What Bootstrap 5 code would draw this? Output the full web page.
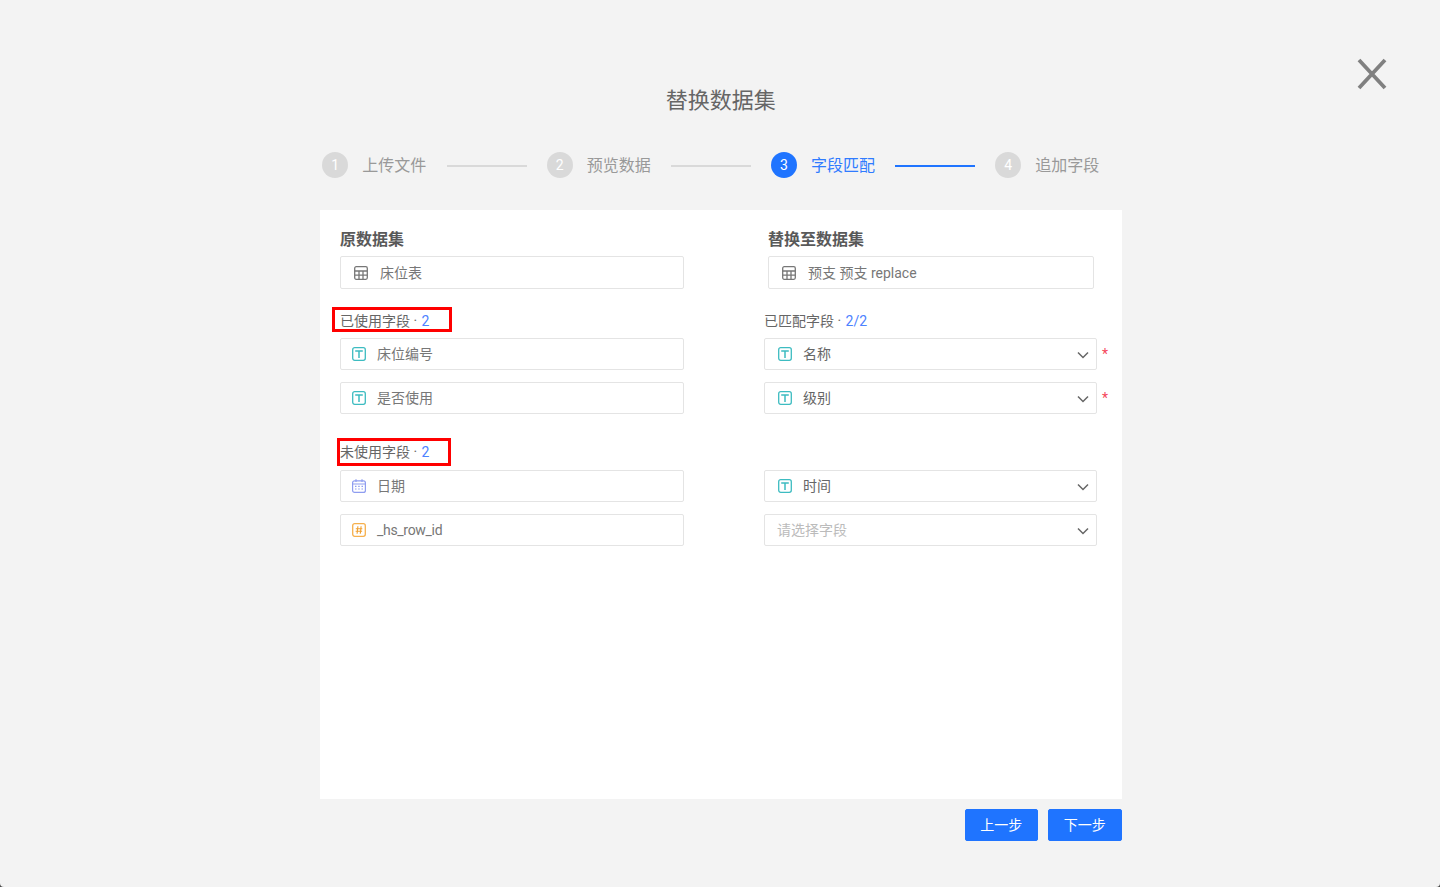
<!doctype html>
<html lang="zh">
<head>
<meta charset="utf-8">
<title>替换数据集</title>
<link href="https://cdn.jsdelivr.net/npm/bootstrap@5.3.0/dist/css/bootstrap.min.css" rel="stylesheet">
<style>
html,body{height:100%;}
body{background:#4a4a4a;font-family:Roboto,"Noto Sans CJK SC",sans-serif;font-size:14px;color:#666;overflow:hidden;}
.shell{position:relative;height:887px;background:#f3f3f3;border-radius:0 0 4px 4px;}
.close-x{position:absolute;left:1356px;top:58px;width:32px;height:32px;}
.wrap{width:801.6px;margin-left:320px;}
.ttl{margin:0;padding-top:86px;height:152px;font-size:22px;line-height:30px;font-weight:400;color:#666;text-align:center;}
.steps{height:58px;align-items:flex-start;padding-left:2.300px;}
.step-dot{width:26px;height:26px;border-radius:50%;background:#d9d9d9;color:#fff;font-size:14px;line-height:26px;text-align:center;flex:none;}
.step-lbl{margin-left:14px;padding-top:1px;font-size:16px;line-height:26px;color:#999;width:64.33px;white-space:nowrap;}
.step-bar{width:80px;height:2px;background:#d9d9d9;margin:13px 20px 0;flex:none;}
.step-on .step-dot{background:#1f74ff;}
.step-on .step-lbl{color:#2f7bff;}
.step-bar.on{background:#1f74ff;}
.sheet{background:#fff;height:589px;padding:20px 0 0 20px;position:relative;}
.col-a{width:344px;flex:none;}
.col-b{width:333px;flex:none;margin-left:80px;}
.head{font-size:16px;font-weight:700;line-height:20px;color:#595959;margin-bottom:6px;}
.box{height:32px;border:1px solid #e4e4e4;border-radius:2px;background:#fff;color:#777;display:flex;align-items:center;padding-left:11px;line-height:20px;}
.box.top{height:33px;padding-left:13px;}
.box.top svg.ico{flex:none;width:14px;height:14px;margin-right:12px;}
.box .sq{flex:none;width:14px;height:14px;margin-right:11px;}
.tight{letter-spacing:-.3px;}
.sub{font-size:14px;line-height:20px;color:#666;height:20px;white-space:nowrap;margin-top:22px;margin-bottom:7px;}
.sub.low{margin-top:28px;margin-bottom:8px;}
.sub b{font-weight:400;color:#4d82ff;margin-left:1px;}
.mark-red{position:absolute;border:3px solid #f00;pointer-events:none;}
.gap12{margin-bottom:12px;}
.sel{position:relative;color:#666;padding-left:13px;}
.sel .arrow{position:absolute;right:7px;top:12px;width:12px;height:8px;}
.sel.ph{color:#bbb;padding-left:12px;}
.req{position:absolute;left:337px;top:7px;color:#f5475b;font-size:14px;line-height:16px;}
.foot{justify-content:flex-end;gap:10px;padding-top:10px;}
.foot .btn{width:73.500px;height:32px;padding:0;background:#1f74ff;border:1px solid #1f74ff;border-radius:2px;font-size:14px;line-height:30px;color:#fff;}
</style>
</head>
<body>
<div class="shell">
  <svg class="close-x" viewBox="0 0 32 32"><path d="M3 2 29 30M29 2 3 30" stroke="#808080" stroke-width="3.800" fill="none"/></svg>
  <div class="wrap">
    <h1 class="ttl">替换数据集</h1>
    <div class="d-flex steps">
      <div class="step-dot">1</div><div class="step-lbl">上传文件</div><div class="step-bar"></div>
      <div class="step-dot">2</div><div class="step-lbl">预览数据</div><div class="step-bar"></div>
      <div class="d-flex step-on"><div class="step-dot">3</div><div class="step-lbl">字段匹配</div></div><div class="step-bar on"></div>
      <div class="step-dot">4</div><div class="step-lbl">追加字段</div>
    </div>
    <div class="sheet d-flex">
      <div class="col-a">
        <div class="head">原数据集</div>
        <div class="box top"><svg class="ico" viewBox="0 0 14 14" fill="none" stroke="#777" stroke-width="1.300"><rect x=".7" y=".7" width="12.600" height="12.600" rx="1.500"/><path d="M.7 5h12.600M.7 9.200h12.600M5 5v8.300M9 5v8.300"/></svg>床位表</div>
        <div class="sub">已使用字段 · <b>2</b></div>
        <div class="box gap12"><svg class="sq" viewBox="0 0 14 14" fill="none"><rect x=".7" y=".7" width="12.600" height="12.600" rx="2" stroke="#3dbcc1" stroke-width="1.300"/><path d="M3.200 3.900h7.600M7 3.900v7" stroke="#3dbcc1" stroke-width="1.500"/></svg>床位编号</div>
        <div class="box"><svg class="sq" viewBox="0 0 14 14" fill="none"><rect x=".7" y=".7" width="12.600" height="12.600" rx="2" stroke="#3dbcc1" stroke-width="1.300"/><path d="M3.200 3.900h7.600M7 3.900v7" stroke="#3dbcc1" stroke-width="1.500"/></svg>是否使用</div>
        <div class="sub low">未使用字段 · <b>2</b></div>
        <div class="box gap12"><svg class="sq" viewBox="0 0 14 14" fill="none" stroke="#8f9df0" stroke-width="1.200"><rect x=".6" y="1.800" width="12.800" height="11.600" rx="2"/><path d="M.6 5h12.800M4 .3v2.800M10 .3v2.800"/><path d="M3 7.300h1.500M6.200 7.300h1.500M9.500 7.300h1.500M3 10h1.500M6.200 10h1.500M9.500 10h1.500"/></svg>日期</div>
        <div class="box"><svg class="sq" viewBox="0 0 14 14" fill="none"><rect x=".7" y=".7" width="12.600" height="12.600" rx="2" stroke="#f6b04d" stroke-width="1.300"/><path d="M5.900 3.300 5.100 10.700M9.100 3.300 8.300 10.700M3.800 5.700h6.500M3.600 8.300h6.500" stroke="#f0a030" stroke-width="1.100"/></svg><span class="tight">_hs_row_id</span></div>
      </div>
      <div class="col-b">
        <div class="head" style="margin-left:4px">替换至数据集</div>
        <div class="box top" style="margin-left:4px;width:325.500px"><svg class="ico" viewBox="0 0 14 14" fill="none" stroke="#777" stroke-width="1.300"><rect x=".7" y=".7" width="12.600" height="12.600" rx="1.500"/><path d="M.7 5h12.600M.7 9.200h12.600M5 5v8.300M9 5v8.300"/></svg>预支 预支 replace</div>
        <div class="sub">已匹配字段 · <b>2/2</b></div>
        <div class="box sel gap12"><svg class="sq" viewBox="0 0 14 14" fill="none"><rect x=".7" y=".7" width="12.600" height="12.600" rx="2" stroke="#3dbcc1" stroke-width="1.300"/><path d="M3.200 3.900h7.600M7 3.900v7" stroke="#3dbcc1" stroke-width="1.500"/></svg>名称<svg class="arrow" viewBox="0 0 12 8" fill="none"><path d="M1 1.500 6 6.500 11 1.500" stroke="#666" stroke-width="1.500"/></svg><span class="req">*</span></div>
        <div class="box sel"><svg class="sq" viewBox="0 0 14 14" fill="none"><rect x=".7" y=".7" width="12.600" height="12.600" rx="2" stroke="#3dbcc1" stroke-width="1.300"/><path d="M3.200 3.900h7.600M7 3.900v7" stroke="#3dbcc1" stroke-width="1.500"/></svg>级别<svg class="arrow" viewBox="0 0 12 8" fill="none"><path d="M1 1.500 6 6.500 11 1.500" stroke="#666" stroke-width="1.500"/></svg><span class="req">*</span></div>
        <div class="sub low"></div>
        <div class="box sel gap12"><svg class="sq" viewBox="0 0 14 14" fill="none"><rect x=".7" y=".7" width="12.600" height="12.600" rx="2" stroke="#3dbcc1" stroke-width="1.300"/><path d="M3.200 3.900h7.600M7 3.900v7" stroke="#3dbcc1" stroke-width="1.500"/></svg>时间<svg class="arrow" viewBox="0 0 12 8" fill="none"><path d="M1 1.500 6 6.500 11 1.500" stroke="#666" stroke-width="1.500"/></svg></div>
        <div class="box sel ph">请选择字段<svg class="arrow" viewBox="0 0 12 8" fill="none"><path d="M1 1.500 6 6.500 11 1.500" stroke="#666" stroke-width="1.500"/></svg></div>
      </div>
      <div class="mark-red" style="left:12px;top:97px;width:120px;height:25px"></div>
      <div class="mark-red" style="left:17px;top:228px;width:114px;height:28px"></div>
    </div>
    <div class="d-flex foot">
      <button class="btn" type="button">上一步</button>
      <button class="btn" type="button">下一步</button>
    </div>
  </div>
</div>
<script src="https://cdn.jsdelivr.net/npm/bootstrap@5.3.0/dist/js/bootstrap.bundle.min.js"></script>
</body>
</html>
